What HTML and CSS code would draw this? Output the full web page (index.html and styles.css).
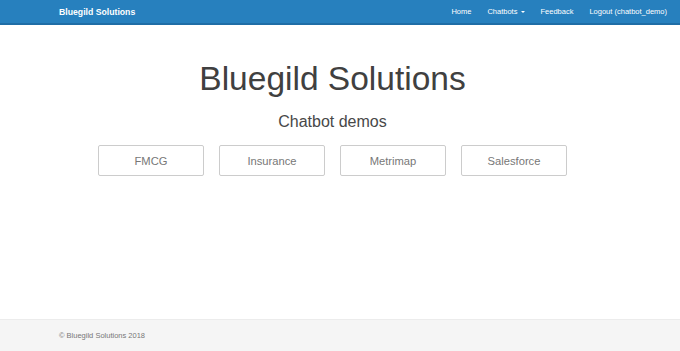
FILE: index.html
```html
<!DOCTYPE html>
<html lang="en">
<head>
  <meta charset="UTF-8" />
  <meta name="viewport" content="width=device-width, initial-scale=1.0"/>
  <title>Bluegild Solutions</title>
  <link rel="stylesheet" href="styles.css">
</head>
<body>

  <nav class="navbar">
    <a class="brand" href="#">Bluegild Solutions</a>
    <ul class="nav-links">
      <li><a href="#">Home</a></li>
      <li><a href="#">Chatbots <span class="caret"></span></a></li>
      <li><a href="#">Feedback</a></li>
      <li><a href="#">Logout (chatbot_demo)</a></li>
    </ul>
  </nav>

  <main>
    <h1>Bluegild Solutions</h1>
    <h3>Chatbot demos</h3>
    <div class="demos">
      <a class="demo-btn" href="#">FMCG</a>
      <a class="demo-btn" href="#">Insurance</a>
      <a class="demo-btn" href="#">Metrimap</a>
      <a class="demo-btn" href="#">Salesforce</a>
    </div>
  </main>

  <footer>
    &copy; Bluegild Solutions 2018
  </footer>

</body>
</html>
```

FILE: styles.css
```css
* { box-sizing: border-box; }
html, body {
  height: 100%;
}
body {
  font-family: 'Liberation Sans', Arial, sans-serif;
  margin: 0;
  padding: 0;
  background: #fff;
  color: #333;
  display: flex;
  flex-direction: column;
}
a {
  text-decoration: none;
}
.navbar {
  background: #2780be;
  border-bottom: 2px solid #1f6da6;
  height: 25px;
  display: flex;
  align-items: center;
  justify-content: space-between;
  padding: 0 5px 0 59px;
}
.brand {
  color: #fff;
  font-weight: bold;
  font-size: 8.7px;
}
.nav-links {
  list-style: none;
  margin: 0;
  padding: 0;
  display: flex;
}
.nav-links a {
  display: block;
  color: #fff;
  font-size: 7.5px;
  padding: 0 8px;
}
.caret {
  display: inline-block;
  width: 0;
  height: 0;
  margin-left: 1px;
  vertical-align: middle;
  border-top: 2.5px solid #fff;
  border-left: 2.5px solid transparent;
  border-right: 2.5px solid transparent;
}
main {
  flex: 1;
  text-align: center;
  padding: 0 15px 0 0;
}
h1 {
  font-size: 33.5px;
  font-weight: normal;
  color: #404040;
  margin: 36px 0 0;
  line-height: 1.1;
}
h3 {
  font-size: 16px;
  font-weight: normal;
  color: #484848;
  margin: 15px 0 0;
  line-height: 1.1;
}
.demos {
  display: flex;
  justify-content: center;
  gap: 15px;
  margin-top: 15px;
}
.demo-btn {
  width: 106px;
  height: 31px;
  border: 1px solid #ccc;
  border-radius: 2px;
  display: flex;
  align-items: center;
  justify-content: center;
  color: #777;
  font-size: 11.2px;
}
footer {
  background: #f5f5f5;
  border-top: 1px solid #ececec;
  height: 32px;
  display: flex;
  align-items: center;
  padding-left: 59px;
  font-size: 7.5px;
  color: #777;
}
```
